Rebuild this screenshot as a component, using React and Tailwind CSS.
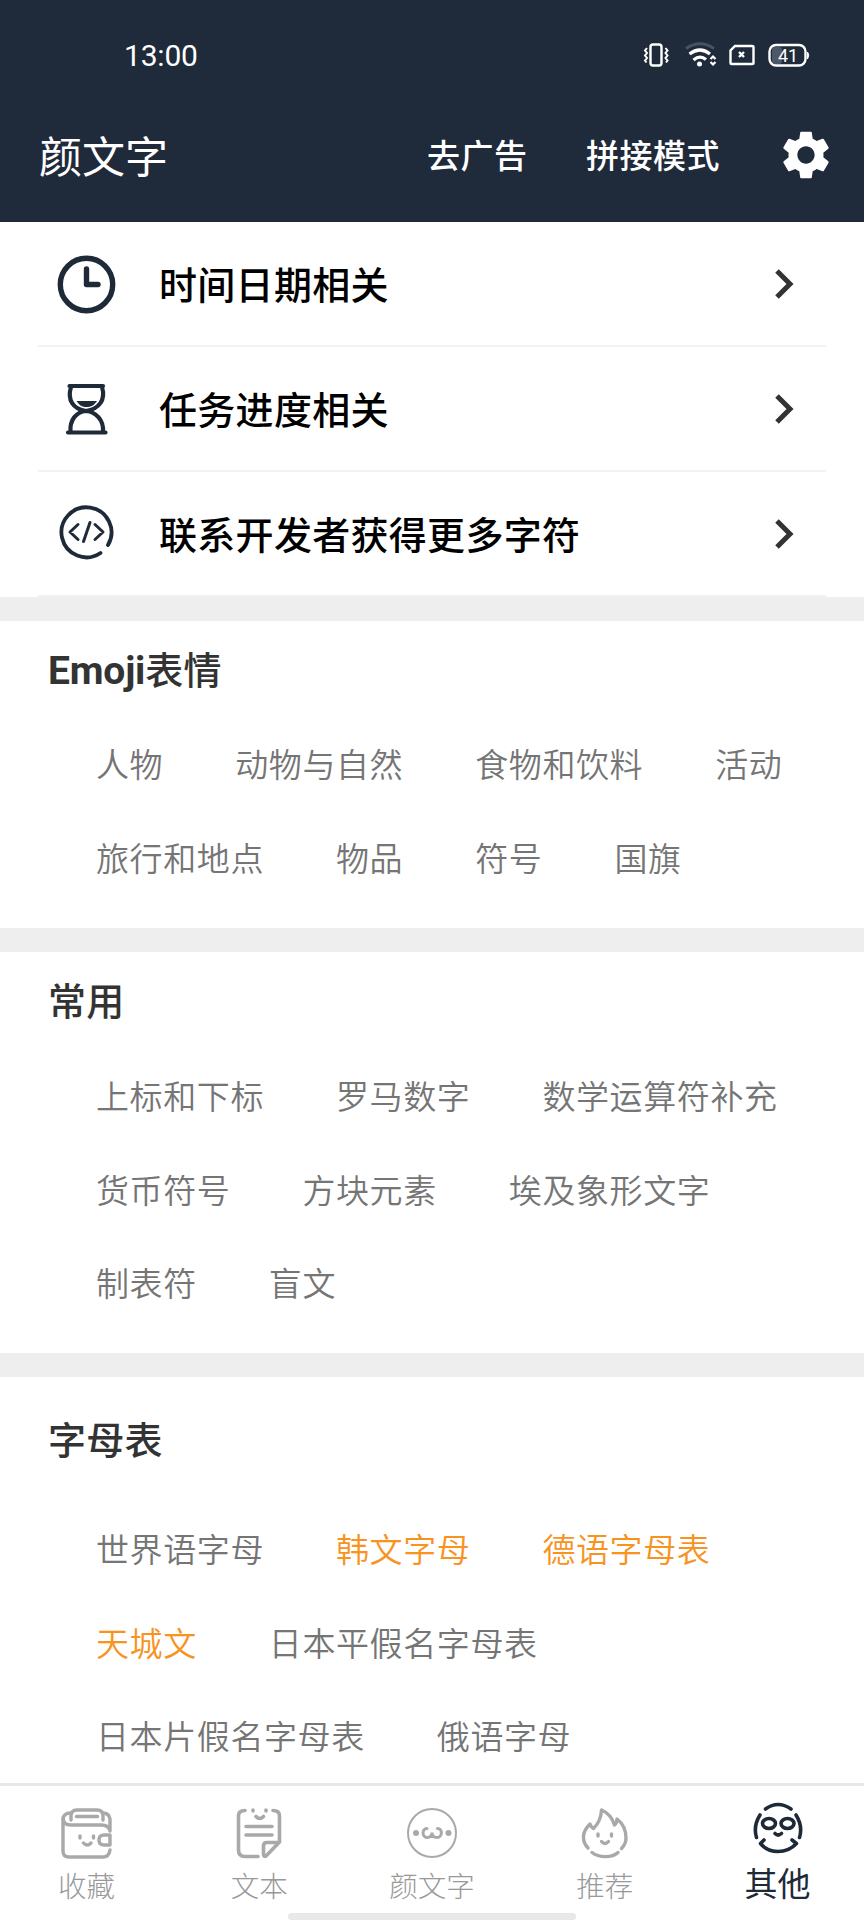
import React from 'react';

const FONT = "font-['Noto_Sans_CJK_SC',sans-serif]";

const links = [
    { label: '时间日期相关', Icon: ClockIcon },
    { label: '任务进度相关', Icon: HourglassIcon },
    { label: '联系开发者获得更多字符', Icon: CodeIcon },
];

const emojiRows = [
    [{ text: '人物' }, { text: '动物与自然' }, { text: '食物和饮料' }, { text: '活动' }],
    [{ text: '旅行和地点' }, { text: '物品' }, { text: '符号' }, { text: '国旗' }],
];

const commonRows = [
    [{ text: '上标和下标' }, { text: '罗马数字' }, { text: '数学运算符补充' }],
    [{ text: '货币符号' }, { text: '方块元素' }, { text: '埃及象形文字' }],
    [{ text: '制表符' }, { text: '盲文' }],
];

const alphabetRows = [
    [{ text: '世界语字母' }, { text: '韩文字母', hot: true }, { text: '德语字母表', hot: true }],
    [{ text: '天城文', hot: true }, { text: '日本平假名字母表' }],
    [{ text: '日本片假名字母表' }, { text: '俄语字母' }],
];

const tabs = [
    { label: '收藏', Icon: WalletIcon },
    { label: '文本', Icon: NoteIcon },
    { label: '颜文字', Icon: FaceIcon },
    { label: '推荐', Icon: FlameIcon },
    { label: '其他', Icon: OtherIcon, active: true },
];

function ClockIcon() {
    return (
        <svg width="60" height="60" viewBox="0 0 60 60" fill="none" stroke="#1f2a38" strokeLinecap="round" strokeLinejoin="round">
            <circle cx="30.500" cy="30.500" r="26.200" strokeWidth="5.400" />
            <path d="M30.500 15V30.500H42" strokeWidth="5.400" />
        </svg>
    );
}

function HourglassIcon() {
    return (
        <svg width="60" height="60" viewBox="0 0 60 60" fill="none" stroke="#1f2a38" strokeWidth="4.200" strokeLinecap="round" strokeLinejoin="round">
            <path d="M13.500 7H47M12 53.500H49.500" />
            <path d="M15 8C11 21 17 30 30 32C43 30 50 21 46 8" />
            <path d="M14.500 53C13.500 41 20 33 30 32C40 33 48 41 47 53" />
            <path d="M20.500 22H41C38 26.500 35 28 30.500 28S23.500 26.500 20.500 22Z" fill="#1f2a38" stroke="none" />
        </svg>
    );
}

function CodeIcon() {
    return (
        <svg width="60" height="60" viewBox="0 0 60 60" fill="none" stroke="#1f2a38" strokeWidth="3" strokeLinecap="round" strokeLinejoin="round">
            <path d="M44.500 49A25 25 0 1 1 52 41" strokeWidth="3.800" />
            <path d="M22 20.500L14 28L22 35.500M39 20.500L47 28L39 35.500M34 18.500L27.500 37.500" />
        </svg>
    );
}

function WalletIcon() {
    return (
        <svg width="56" height="56" viewBox="0 0 56 56" fill="none" stroke="#a9a9a9" strokeWidth="3.400" strokeLinecap="round" strokeLinejoin="round">
            <path d="M13 15V11Q13 5 19 5H39Q45 5 45 11V15" />
            <path d="M18.500 11.500H39.500" />
            <path d="M13 8Q5 8 5 15V46Q5 52 11 52H45Q51 52 52 45" />
            <path d="M5 13Q5 20 13 20H43Q51 20 52 26V14Q51 8 45 8" />
            <path d="M52 30H46Q41 30 41 35T46 40H52Z" />
            <path d="M22 31V33M35.500 31V33M25.500 38Q29 42 33 38" />
        </svg>
    );
}

function NoteIcon() {
    return (
        <svg width="56" height="56" viewBox="0 0 56 56" fill="none" stroke="#a9a9a9" strokeWidth="3.600" strokeLinecap="round" strokeLinejoin="round">
            <path d="M14 5.500Q7.500 5.500 7.500 11V45Q7.500 51.500 14 51.500H27M42 5.500Q48.500 5.500 48.500 11V37L35 51Q32.500 52 32.500 49V41Q32.500 37.500 36 37.500H47" />
            <path d="M15 21.500H41M15 30H41M22 5V6M35 5V6M25 11.500Q28.500 15.500 32.500 11.500" />
        </svg>
    );
}

function FaceIcon() {
    return (
        <svg width="56" height="56" viewBox="0 0 56 56" fill="none" stroke="#a9a9a9">
            <circle cx="28" cy="28" r="24" strokeWidth="2" />
            <circle cx="12" cy="28" r="3" fill="#a9a9a9" stroke="none" />
            <circle cx="44.500" cy="28" r="3" fill="#a9a9a9" stroke="none" />
            <path d="M23 23.500C17.500 23.500 18 32.500 23 32.500Q28 32.500 28 27.500Q28 32.500 33 32.500C38.500 32.500 39 23.500 33.500 23.500" strokeWidth="3" strokeLinecap="round" />
        </svg>
    );
}

function FlameIcon() {
    return (
        <svg width="56" height="56" viewBox="0 0 56 56" fill="none" stroke="#a9a9a9" strokeWidth="3.400" strokeLinecap="round" strokeLinejoin="round">
            <path d="M11 43Q6 38 6.500 31Q7 25 13 19Q14 22 16.500 23.500Q24 16 24.500 5Q34 9 37.500 20Q40 18 40 14Q49 21 49 33Q49 39 44.500 43.500" />
            <path d="M15 47.500C22 53 35 53 41 47.500M21 29V31M34.500 29V31M24.500 36.500Q28 40.500 31.500 36.500" />
        </svg>
    );
}

function OtherIcon() {
    return (
        <svg width="56" height="56" viewBox="0 0 56 56" fill="none" stroke="#1f2a38" strokeWidth="3.600" strokeLinecap="round" strokeLinejoin="round">
            <path d="M15.500 9Q28 0 41 9M10 15Q3 26 6.500 37.500M46 15Q53 26 49.500 37.500" />
            <path d="M14 40L10.500 43.500Q17 51.500 28 51.500T46.500 43.500L42 40" />
            <ellipse cx="19" cy="23.500" rx="6.500" ry="5" />
            <ellipse cx="37.500" cy="23.500" rx="6.500" ry="5" />
            <path d="M25 33.500Q28 36.500 31.500 33.500" />
        </svg>
    );
}

const StatusIcons = () => (
    <svg width="168" height="26" viewBox="0 0 168 26" fill="none" stroke="#fff" strokeWidth="2.400">
        <rect x="7.500" y="2.500" width="11" height="21" rx="2.500" />
        <path d="M4 6L2 8.500L4 11L2 13.500L4 16L2 18.500L3.500 20.500M22.500 6L24.500 8.500L22.500 11L24.500 13.500L22.500 16L24.500 18.500L23 20.500" strokeWidth="2" />
        <path d="M43 6.500Q57 -3 71 6.500" stroke="#465262" strokeWidth="3" />
        <path d="M46.500 12Q57 4 67 12M50.500 18Q57 12.500 63 17.500" strokeWidth="3.200" />
        <circle cx="56.500" cy="22" r="2.500" fill="#fff" stroke="none" />
        <path d="M67.500 17L70 14.500L72.500 17M67.500 20L70 22.500L72.500 20" strokeWidth="2.200" />
        <path d="M92 4H109Q110.500 4 110.500 5V21Q110.500 22 109 22H88.500Q87.500 22 87.500 21V8.500Z" />
        <path d="M96 10L101 15M101 10L96 15" strokeWidth="2.400" />
        <rect x="129" y="5" width="10" height="17" rx="3" fill="#4d5866" stroke="none" />
        <rect x="126.500" y="3" width="36" height="20.500" rx="6.500" />
        <path d="M164.500 10Q167 13 164.500 17Z" fill="#fff" strokeWidth="1" />
        <text x="145" y="19.500" textAnchor="middle" fill="#fff" stroke="none" fontSize="18" fontFamily="Roboto, sans-serif" letterSpacing="0">41</text>
    </svg>
);

const GearIcon = () => (
    <svg width="56" height="56" viewBox="0 0 24 24" fill="#fff">
        <path d="M19.430 12.980c.04-.32.07-.64.07-.98s-.03-.66-.07-.98l2.110-1.650c.19-.15.24-.42.12-.64l-2-3.460c-.12-.22-.39-.3-.61-.22l-2.490 1c-.52-.4-1.080-.73-1.690-.98l-.38-2.650C14.460 2.180 14.250 2 14 2h-4c-.25 0-.46.18-.49.42l-.38 2.650c-.61.25-1.170.59-1.690.98l-2.490-1c-.23-.09-.49 0-.61.22l-2 3.460c-.13.22-.07.49.12.64l2.110 1.650c-.04.32-.07.65-.07.98s.03.66.07.98l-2.110 1.650c-.19.15-.24.42-.12.64l2 3.460c.12.22.39.3.61.22l2.490-1c.52.4 1.080.73 1.690.98l.38 2.650c.03.24.24.42.49.42h4c.25 0 .46-.18.49-.42l.38-2.650c.61-.25 1.170-.59 1.690-.98l2.490 1c.23.09.49 0 .61-.22l2-3.460c.12-.22.07-.49-.12-.64l-2.110-1.650zM12 15.700c-2.040 0-3.700-1.660-3.700-3.700s1.660-3.700 3.700-3.700 3.700 1.660 3.700 3.700-1.660 3.700-3.700 3.700z" />
    </svg>
);

const Section = ({ title, rows, className, rowsClassName }) => (
    <section className={`bg-white pl-12 ${className}`}>
        <h2 className="h-[54px] text-[38px] leading-[54px] font-medium tracking-[0.2px] text-[#333]">{title}</h2>
        <div className={`pl-12 ${rowsClassName}`}>
            {rows.map((row, i) => (
                <div key={i} className="flex h-[93.6px] items-center gap-[72px] whitespace-nowrap text-[33px] font-[350] tracking-[0.6px]">
                    {row.map((item) => (
                        <span key={item.text} className={item.hot ? 'text-[#f7931e]' : 'text-[#757575]'}>
                            {item.text}
                        </span>
                    ))}
                </div>
            ))}
        </div>
    </section>
);

const App = () => {
    return (
        <div className={`flex h-[1920px] w-[864px] flex-col overflow-hidden bg-white ${FONT}`}>
            <header className="h-[222px] shrink-0 bg-[#1f2a3a] text-white">
                <div className="flex h-[110px] items-center justify-between pl-[124px] pr-[53px]">
                    <span className="font-['Roboto',sans-serif] text-[30px] tracking-[-0.2px]">13:00</span>
                    <StatusIcons />
                </div>
                <div className="flex h-[90px] items-center pl-[39px]">
                    <h1 className="w-[388px] pb-[2px] text-[43px]">颜文字</h1>
                    <span className="w-[159px] text-[33px] font-medium tracking-[0.5px]">去广告</span>
                    <span className="w-[192px] text-[33px] font-medium tracking-[0.5px]">拼接模式</span>
                    <GearIcon />
                </div>
            </header>

            <main className="flex h-[1561px] shrink-0 flex-col overflow-hidden">
                <div className="h-[375px] shrink-0 pr-[38px] pl-[38px]">
                    {links.map(({ label, Icon }) => (
                        <div key={label} className="flex h-[125px] items-center border-b-2 border-[#f2f2f2] pt-px pr-[30px] pl-[18px]">
                            <Icon />
                            <span className="ml-[43px] flex-1 pb-[3px] text-[38px] font-medium tracking-[0.3px] text-black">{label}</span>
                            <svg width="22" height="32" viewBox="0 0 22 32" fill="none" stroke="#333" strokeWidth="5">
                                <path d="M3 3L16 16L3 29" />
                            </svg>
                        </div>
                    ))}
                </div>
                <div className="h-6 shrink-0 bg-[#eee]" />
                <Section title={<><span className="font-['Roboto',sans-serif] text-[39px] font-bold tracking-[-0.2px]">Emoji</span>表情</>} rows={emojiRows} className="h-[307px] shrink-0 pt-5" rowsClassName="pt-[22px]" />
                <div className="h-6 shrink-0 bg-[#eee]" />
                <Section title="常用" rows={commonRows} className="h-[401px] shrink-0 pt-5" rowsClassName="pt-[23px]" />
                <div className="h-6 shrink-0 bg-[#eee]" />
                <Section title="字母表" rows={alphabetRows} className="h-[420px] shrink-0 pt-[34px]" rowsClassName="pt-[37px]" />
            </main>

            <nav className="relative grid h-[137px] shrink-0 grid-cols-5 border-t-[3px] border-[#e8e8e8] bg-white">
                {tabs.map(({ label, Icon, active }) => (
                    <div key={label} className={active ? 'flex flex-col items-center pt-[14px]' : 'flex flex-col items-center pt-[19px]'}>
                        <Icon />
                        <span className={active ? 'text-[33px] leading-[52px] text-[#1f2a38]' : 'text-[28.500px] font-light leading-[47px] text-[#999]'}>
                            {label}
                        </span>
                    </div>
                ))}
                <div className="absolute bottom-0 left-[288px] h-[7px] w-[288px] rounded-full bg-[#e8e8e8]" />
            </nav>
        </div>
    );
};

export default App;
